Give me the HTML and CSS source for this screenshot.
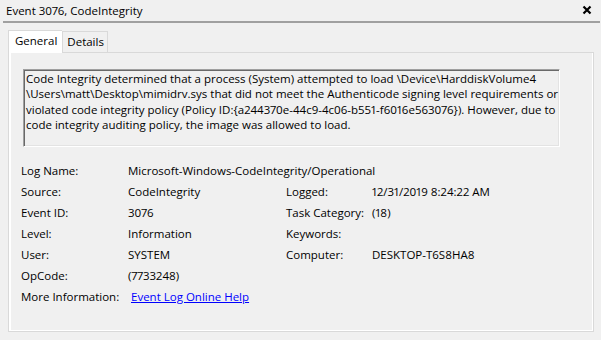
FILE: index.html
```html
<!DOCTYPE html>
<html>
<head>
<meta charset="utf-8">
<title>Event 3076, CodeIntegrity</title>
<link rel="stylesheet" href="styles.css">
</head>
<body>
<div class="window">
  <div class="titlebar">
    <span class="title">Event 3076, CodeIntegrity</span>
    <svg class="close" width="10" height="10" viewBox="0 0 10 10"><path d="M1.5 1.5 L8.5 8.5 M8.5 1.5 L1.5 8.5" stroke="#000" stroke-width="2.2" fill="none"/></svg>
  </div>
  <div class="rule"></div>
  <div class="tabs">
    <div class="tab active">General</div>
    <div class="tab">Details</div>
  </div>
  <div class="panel">
    <div class="message">Code Integrity determined that a process (System) attempted to load \Device\HarddiskVolume4<br>\Users\matt\Desktop\mimidrv.sys that did not meet the Authenticode signing level requirements or<br>violated code integrity policy (Policy ID:{a244370e-44c9-4c06-b551-f6016e563076}). However, due to<br>code integrity auditing policy, the image was allowed to load.</div>
    <div class="fields">
      <div class="label">Log Name:</div>
      <div class="value wide">Microsoft-Windows-CodeIntegrity/Operational</div>

      <div class="label">Source:</div>
      <div class="value">CodeIntegrity</div>
      <div class="label">Logged:</div>
      <div class="value">12/31/2019 8:24:22 AM</div>

      <div class="label">Event ID:</div>
      <div class="value">3076</div>
      <div class="label">Task Category:</div>
      <div class="value">(18)</div>

      <div class="label">Level:</div>
      <div class="value">Information</div>
      <div class="label">Keywords:</div>
      <div class="value"></div>

      <div class="label">User:</div>
      <div class="value">SYSTEM</div>
      <div class="label">Computer:</div>
      <div class="value">DESKTOP-T6S8HA8</div>

      <div class="label">OpCode:</div>
      <div class="value wide">(7733248)</div>

      <div class="label">More Information:</div>
      <div class="value wide"><a class="link" href="#">Event Log Online Help</a></div>
    </div>
  </div>
</div>
</body>
</html>
```

FILE: styles.css
```css
html, body {
  margin: 0;
  padding: 0;
  background: #f0f0f0;
}
body {
  font-family: "Open Sans", "Noto Sans", "Liberation Sans", sans-serif;
  font-size: 11.5px;
  font-variant-numeric: proportional-nums;
  color: #000;
  width: 601px;
  height: 340px;
  overflow: hidden;
}
.window {
  display: flex;
  flex-direction: column;
}
.titlebar {
  height: 21px;
  line-height: 21px;
  display: flex;
  align-items: center;
  justify-content: space-between;
  padding: 0 9px 0 6px;
}
.title {
  white-space: nowrap;
}
.close {
  display: block;
  margin-top: -1px;
}
.rule {
  height: 2px;
  background: #a0a0a0;
  margin: 0 1px 0 3px;
}
.tabs {
  display: flex;
  align-items: flex-end;
  margin: 6px 0 0 8px;
  height: 23px;
}
.tab {
  height: 20px;
  line-height: 20px;
  padding: 0 3px 0 4px;
  border: 1px solid #d9d9d9;
  border-bottom: none;
  background: #f0f0f0;
  white-space: nowrap;
}
.tab.active {
  height: 22px;
  padding: 0 5px 0 6px;
  background: #fff;
  position: relative;
  z-index: 1;
  margin-bottom: -1px;
  border-right: none;
}
.tab.active + .tab {
  border-left: 1px solid #d9d9d9;
}
.panel {
  margin: 0 7px 0 8px;
  height: 280px;
  border: 1px solid #d9d9d9;
  box-shadow: inset 2px 0 0 #fff, inset -1px -1px 0 #fff;
  padding: 16px 0 0 12px;
  box-sizing: border-box;
}
.message {
  margin-left: 2px;
  width: 533px;
  height: 75px;
  border: 1px solid;
  border-color: #a0a0a0 #fff #fff #a0a0a0;
  box-shadow: inset 1px 1px 0 #696969, inset -1px -1px 0 #e3e3e3;
  padding: 1px 0 0 2px;
  line-height: 15.3px;
  white-space: nowrap;
  overflow: hidden;
}
.fields {
  display: grid;
  grid-template-columns: 107px 158px 86px auto;
  grid-auto-rows: 21px;
  line-height: 21px;
  margin-top: 13px;
  white-space: nowrap;
}
.value.wide {
  grid-column: 2 / 5;
}
.link {
  color: #0000ff;
  text-decoration: underline;
  margin-left: 3px;
}
```
